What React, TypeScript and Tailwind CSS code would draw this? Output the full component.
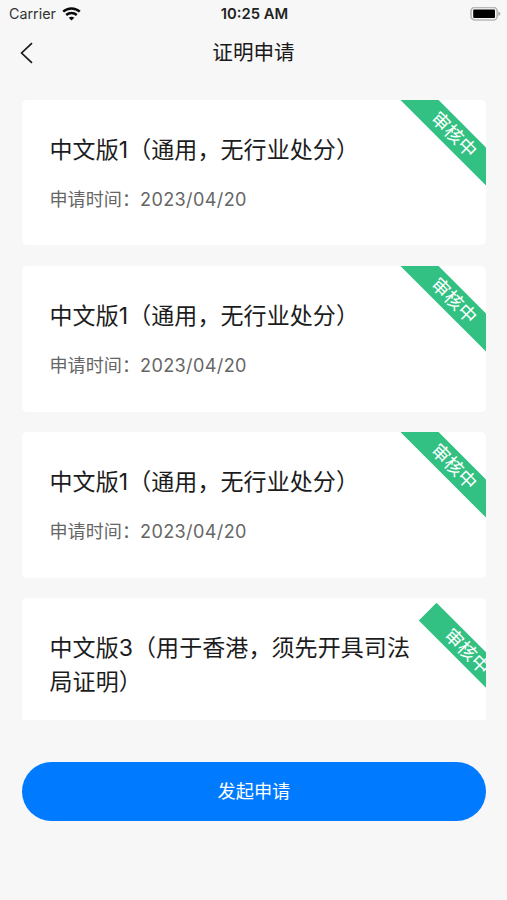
import clsx from 'clsx';

type Application = {
  title: string;
  date?: string;
  wide?: boolean;
};

const applications: Application[] = [
  { title: '中文版1（通用，无行业处分）', date: '2023/04/20', wide: true },
  { title: '中文版1（通用，无行业处分）', date: '2023/04/20', wide: true },
  { title: '中文版1（通用，无行业处分）', date: '2023/04/20', wide: true },
  { title: '中文版3（用于香港，须先开具司法局证明）' },
];

function WifiIcon() {
  return (
    <svg className="h-[14px] w-[19px]" viewBox="0 0 19 14" fill="none" stroke="#0a0a0a">
      <path d="M1.2 4.7C5.9.4 13.1.4 17.8 4.7" strokeWidth="2.5" />
      <path d="M4.2 8C7.2 5.3 11.8 5.3 14.8 8" strokeWidth="2.4" />
      <path d="M9.5 13.6 6.7 10.8C8.3 9.4 10.7 9.4 12.3 10.8Z" fill="#0a0a0a" stroke="none" />
    </svg>
  );
}

function BatteryIcon() {
  return (
    <svg className="h-[14px] w-[31px]" viewBox="0 0 31 14" fill="none">
      <rect x="1" y="0.4" width="26.2" height="12.6" rx="3.8" stroke="#b8b8b8" strokeWidth="1.7" />
      <rect x="3.2" y="2.4" width="21.8" height="8.7" rx="1" fill="#000" />
      <path d="M28.4 4.6C31 5.6 31 8 28.4 9Z" fill="#a5a5a5" />
    </svg>
  );
}

function StatusBar() {
  return (
    <div className="grid h-7 grid-cols-3 items-center pr-[6px] pl-[9px]">
      <div className="flex items-center gap-[6px]">
        <span className="text-[14.3px] leading-7 text-[#333]">Carrier</span>
        <WifiIcon />
      </div>
      <span className="-ml-px text-center text-[14.8px] leading-7 font-semibold whitespace-nowrap text-[#222]">10:25 AM</span>
      <div className="flex justify-end">
        <BatteryIcon />
      </div>
    </div>
  );
}

function Header() {
  return (
    <header className="grid h-[50px] grid-cols-[60px_1fr_60px] items-center">
      <button className="pl-5" aria-label="返回">
        <svg className="h-[22px] w-[14px]" viewBox="0 0 14 22" fill="none" stroke="#1a1a1a" strokeWidth="1.7">
          <path d="M12 1.2 1.6 11 12 20.8" />
        </svg>
      </button>
      <h1 className="text-center text-[20.6px] leading-none text-[#1a1a1a]">证明申请</h1>
    </header>
  );
}

// Corner ribbon, clipped by the card
function Ribbon({ wide }: { wide?: boolean }) {
  return (
    <div
      className={clsx(
        'absolute flex rotate-45 items-center justify-center bg-[#32c182] leading-none whitespace-nowrap text-white',
        wide
          ? 'top-[21.5px] -right-[37.5px] h-[27px] w-[140px] text-[18.5px]'
          : 'top-[38.5px] -right-[33px] h-[25px] w-[107px] pl-[5px] text-[18.5px]'
      )}
    >
      审核中
    </div>
  );
}

function Card({ item }: { item: Application }) {
  return (
    <li
      className={clsx(
        'relative overflow-hidden rounded-[5px] bg-white px-7 pt-[33px]',
        item.date ? 'h-[145.8px]' : 'h-[122px] rounded-b-none'
      )}
    >
      <h2 className="w-[370px] text-[23px] leading-[34px] tracking-[0.08px] text-[#1c1c1c]">{item.title}</h2>
      {item.date && (
        <p className="mt-[20.5px] flex text-[18.1px] leading-6 text-[#666]">
          <span>申请时间：</span>
          <span className="tracking-[0.36px]">{item.date}</span>
        </p>
      )}
      <Ribbon wide={item.wide} />
    </li>
  );
}

export default function App() {
  return (
    <div className="flex h-[900px] w-[507px] flex-col overflow-hidden bg-[#f7f7f7] font-['Inter','Noto_Sans_CJK_SC',sans-serif]">
      <StatusBar />
      <Header />
      <main className="pt-[21.6px] pr-[20.7px] pl-[21.5px]">
        <ul className="flex flex-col gap-[20.4px]">
          {applications.map((item, i) => (
            <Card key={i} item={item} />
          ))}
        </ul>
        <button className="mt-[42px] h-[58.5px] w-full rounded-full bg-[#007aff] text-[18.2px] leading-none text-white">
          发起申请
        </button>
      </main>
    </div>
  );
}
